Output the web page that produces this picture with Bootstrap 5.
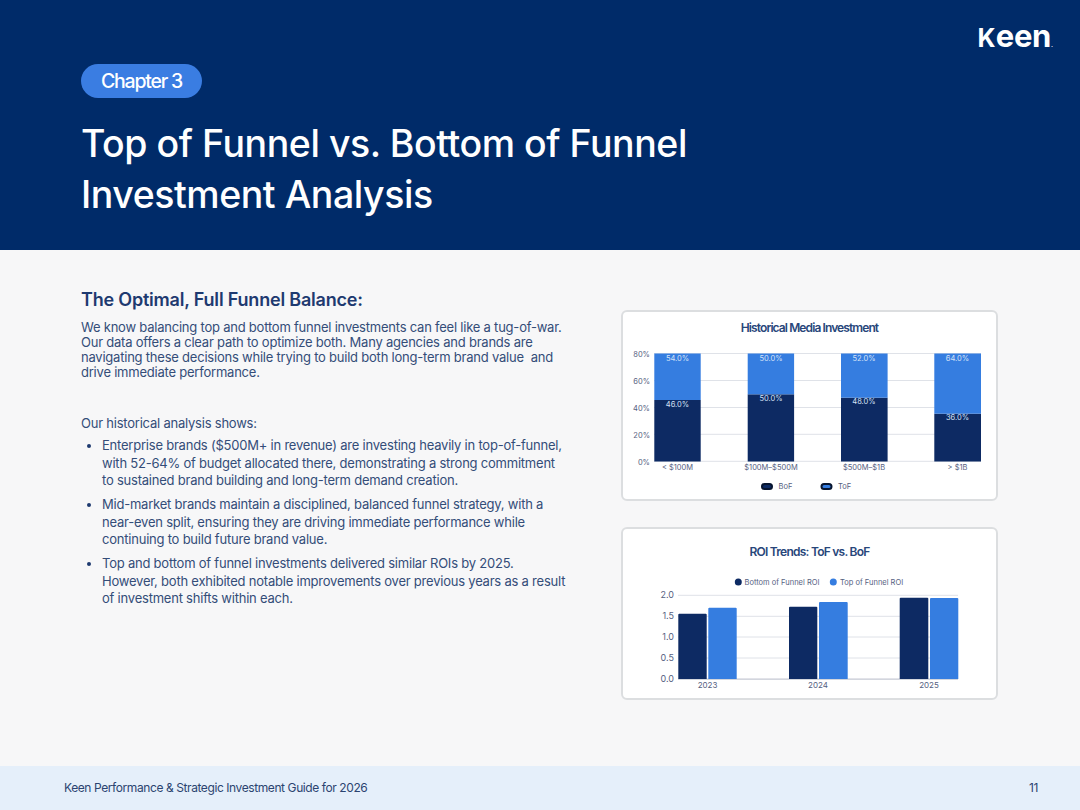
<!DOCTYPE html>
<html lang="en"><head><meta charset="utf-8"><title>Keen</title>
<link href="https://cdn.jsdelivr.net/npm/bootstrap@5.3.0/dist/css/bootstrap.min.css" rel="stylesheet">
<style>
html,body{margin:0;width:1080px;height:810px;overflow:hidden}
body{font-family:Inter,"Liberation Sans",sans-serif;background:#f7f7f8;color:#2b4470}
.hero{height:250px;background:#002b69;padding:17px 27px 0 81px}
.hero-main{padding-top:47px}
.brand{height:38px;line-height:38px;font-size:31px;font-weight:700;color:#fff;letter-spacing:-.35px;white-space:nowrap}
.brand-k{font-size:25px;letter-spacing:.2px}
.brand-dot{font-size:7px;font-weight:400;letter-spacing:0}
.pill{width:121px;height:34px;background:#3a7de2;color:#fff;font-size:19.5px;font-weight:500;letter-spacing:-1.2px;border-radius:17px;padding-top:2px}
.hero-title{font-size:37.5px;line-height:51px;font-weight:500;color:#fff;margin:20px 0 0;letter-spacing:-.45px}
.content{height:516px;padding:39px 82px 0 81px;gap:53px}
.leftcol{width:487px;flex:none}
.subhead{font-size:18px;line-height:22px;font-weight:600;color:#1e3a70;margin:0 0 9px;letter-spacing:-.2px}
.para{font-size:13px;line-height:15px;margin:0;letter-spacing:-.22px;color:#344d78}
.para-gap{margin:34px 0 5px;line-height:18px}
.points{font-size:13px;line-height:17.5px;margin:0;padding-left:21px;letter-spacing:-.22px;color:#344d78}
.points li{margin-bottom:6.5px}
.points li::marker{color:#1e3a70}
.chartbox{width:377px;background:#fff;border:2px solid #dcdee0;border-radius:6px}
.chartbox svg{display:block}
.chart-title{font-size:12px;font-weight:600;letter-spacing:-.9px;color:#28467a;text-align:center;margin:0;line-height:16px}
.first{height:191px;margin-top:21px;padding-top:8px}
.second{height:173px;margin-top:26px;padding-top:13px}
.second .chart-title{line-height:20px;letter-spacing:-.75px}
.chartbox text{font-family:Inter,"Liberation Sans",sans-serif;font-size:7.5px;fill:#56617f}
.chartbox text.w{fill:#d5e2f7}
.chartbox text.big{font-size:9px}
.chartbox text.mid{font-size:8px}
.footbar{height:44px;background:#e5effa;padding:0 42px 0 64px;font-size:12px;letter-spacing:-.41px;color:#2b4470}
</style></head><body>
<header class="hero d-flex justify-content-between">
  <div class="hero-main">
    <div class="pill d-flex align-items-center justify-content-center">Chapter 3</div>
    <h1 class="hero-title">Top of Funnel vs. Bottom of Funnel<br>Investment Analysis</h1>
  </div>
  <div class="brand"><span class="brand-k">K</span>een<span class="brand-dot">.</span></div>
</header>
<main class="content d-flex">
  <section class="leftcol">
    <h2 class="subhead">The Optimal, Full Funnel Balance:</h2>
    <p class="para">We know balancing top and bottom funnel investments can feel like a tug-of-war.<br>Our data offers a clear path to optimize both. Many agencies and brands are<br>navigating these decisions while trying to build both long-term brand value&nbsp; and<br>drive immediate performance.</p>
    <p class="para para-gap">Our historical analysis shows:</p>
    <ul class="points">
      <li>Enterprise brands ($500M+ in revenue) are investing heavily in top-of-funnel, with 52-64% of budget allocated there, demonstrating a strong commitment to sustained brand building and long-term demand creation.</li>
      <li>Mid-market brands maintain a disciplined, balanced funnel strategy, with a near-even split, ensuring they are driving immediate performance while continuing to build future brand value.</li>
      <li>Top and bottom of funnel investments delivered similar ROIs by 2025. However, both exhibited notable improvements over previous years as a result of investment shifts within each.</li>
    </ul>
  </section>
  <aside class="flex-shrink-0">
    <div class="chartbox first">
      <h3 class="chart-title">Historical Media Investment</h3>
      <svg width="373" height="163" viewBox="623 336 373 163">
        <g stroke="#dfe2e8" stroke-width="1"><path d="M654 353.5H981M654 380.5H981M654 407.5H981M654 434.3H981M654 461.3H981"/></g>
        <g fill="#0d2a63"><rect x="654.3" y="400" width="46.4" height="61.5"/><rect x="747.7" y="394.3" width="46.4" height="67.2"/><rect x="841" y="397.7" width="46.6" height="63.8"/><rect x="934.3" y="413.7" width="46.7" height="47.8"/></g>
        <g fill="#357de0"><rect x="654.3" y="353.5" width="46.4" height="46.5"/><rect x="747.7" y="353.5" width="46.4" height="40.8"/><rect x="841" y="353.5" width="46.6" height="44.2"/><rect x="934.3" y="353.5" width="46.7" height="60.2"/></g>
        <g text-anchor="end"><text x="650" y="357">80%</text><text x="650" y="384">60%</text><text x="650" y="411">40%</text><text x="650" y="437.5">20%</text><text x="650" y="464.5">0%</text></g>
        <g text-anchor="middle">
          <text class="w" x="677.5" y="361">54.0%</text><text class="w" x="771" y="361">50.0%</text><text class="w" x="864" y="361">52.0%</text><text class="w" x="957.5" y="361">64.0%</text>
          <text class="w" x="677.5" y="406.5">46.0%</text><text class="w" x="771" y="401">50.0%</text><text class="w" x="864" y="404">48.0%</text><text class="w" x="957.5" y="420">36.0%</text>
          <text x="677.5" y="470">&lt; $100M</text><text x="771" y="470">$100M–$500M</text><text x="864" y="470">$500M–$1B</text><text x="957.5" y="470">&gt; $1B</text>
        </g>
        <rect x="762" y="484" width="10" height="5" rx="2.5" fill="#0d2a63" stroke="#071530" stroke-width="2"/>
        <text x="778.5" y="489">BoF</text>
        <rect x="821.5" y="484" width="10" height="5" rx="2.5" fill="#357de0" stroke="#071530" stroke-width="2"/>
        <text x="838" y="489">ToF</text>
      </svg>
    </div>
    <div class="chartbox second">
      <h3 class="chart-title">ROI Trends: ToF vs. BoF</h3>
      <svg width="373" height="136" viewBox="623 562 373 136">
        <circle cx="738.3" cy="582" r="3.5" fill="#0d2a63"/><text x="744.5" y="584.5">Bottom of Funnel ROI</text>
        <circle cx="833.3" cy="582" r="3.5" fill="#357de0"/><text x="840" y="584.5">Top of Funnel ROI</text>
        <g stroke="#dfe2e8" stroke-width="1"><path d="M678 595.3H958M678 616.3H958M678 637H958M678 658H958"/></g>
        <path d="M678 679.2H958" stroke="#c5c8d3" stroke-width="1.2"/>
        <g fill="#0d2a63"><path d="M678.3 679V614.7a1 1 0 0 1 1-1H705.7a1 1 0 0 1 1 1V679Z"/><path d="M789 679V607.7a1 1 0 0 1 1-1H816.3a1 1 0 0 1 1 1V679Z"/><path d="M899.7 679V598.7a1 1 0 0 1 1-1H927.3a1 1 0 0 1 1 1V679Z"/></g>
        <g fill="#357de0"><path d="M708.3 679V608.7a1 1 0 0 1 1-1H735.7a1 1 0 0 1 1 1V679Z"/><path d="M819 679V603a1 1 0 0 1 1-1H846.7a1 1 0 0 1 1 1V679Z"/><path d="M930 679V599a1 1 0 0 1 1-1H957.3a1 1 0 0 1 1 1V679Z"/></g>
        <g text-anchor="end"><text class="big" x="674" y="598">2.0</text><text class="big" x="674" y="619">1.5</text><text class="big" x="674" y="640">1.0</text><text class="big" x="674" y="661">0.5</text><text class="big" x="674" y="682">0.0</text></g>
        <g text-anchor="middle"><text class="mid" x="707.5" y="688">2023</text><text class="mid" x="818" y="688">2024</text><text class="mid" x="929" y="688">2025</text></g>
      </svg>
    </div>
  </aside>
</main>
<footer class="footbar d-flex align-items-center justify-content-between"><span>Keen Performance &amp; Strategic Investment Guide for 2026</span><span>11</span></footer>
</body></html>
